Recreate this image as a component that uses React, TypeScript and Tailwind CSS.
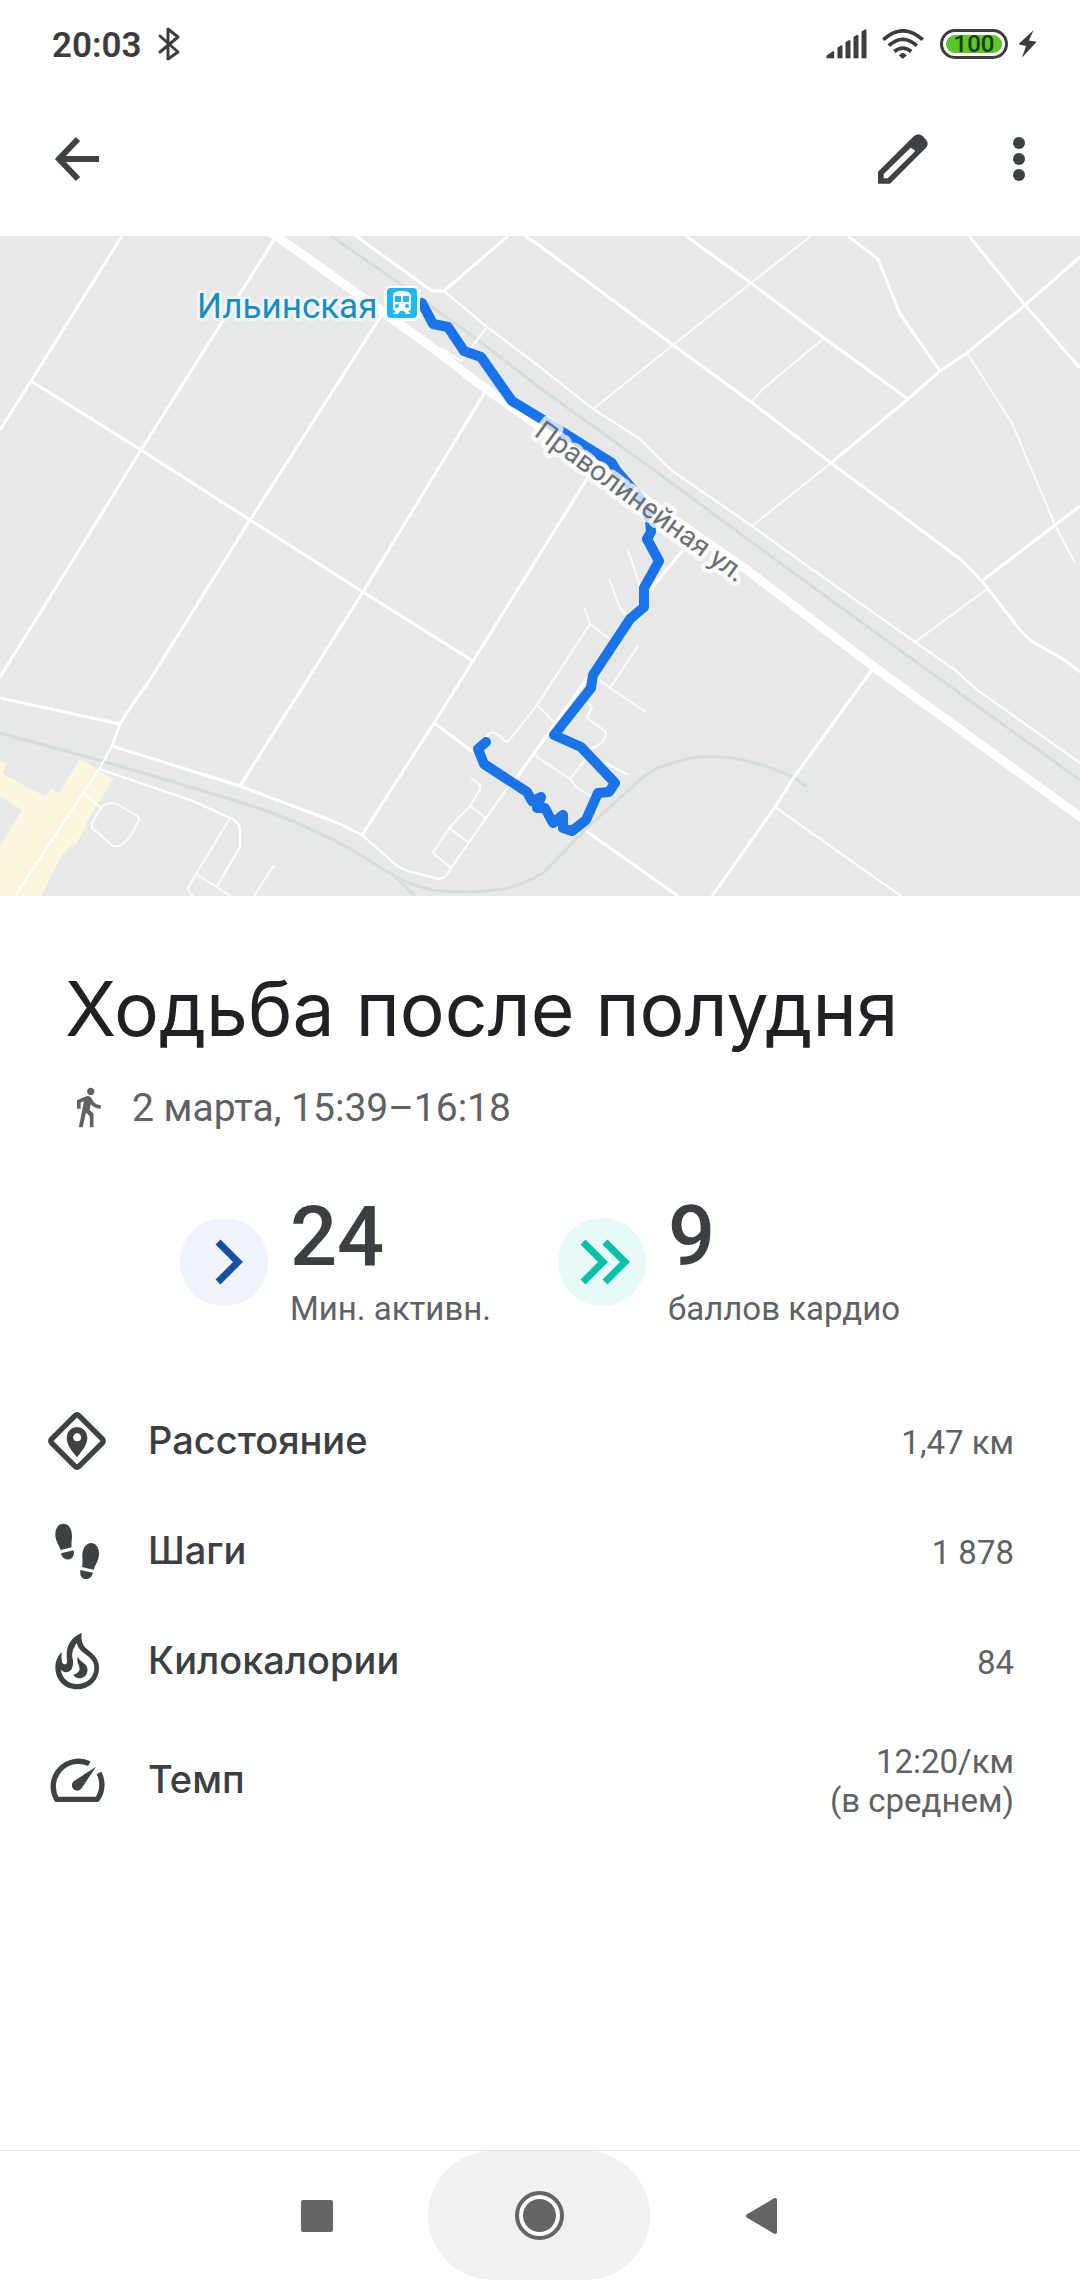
import React from "react";

const thickRoads = [
  "M122 236 L31 381 L0 430",
  "M274 240 L141 450 L73 560 L0 677",
  "M381 316 L250 520 L148 683 Q132 704 120 724 L112 746",
  "M485 392 L363 592 L240 786",
  "M588 477 L473 661 L434 723 L362 835",
  "M31 381 L141 450 L250 520 L363 592 L473 661",
  "M0 698 L120 724",
  "M112 746 L240 786 L338 823 L362 835",
  "M356 236 L432 291 L444 291 L508 236",
  "M525 236 L540 246 L673 345 L751 402 L831 463 L960 559 L982 581 L1020 630 L1031 641 L1063 659 L1080 672",
  "M686 236 L751 283 L824 338 L908 399",
  "M848 236 L878 259 L900 314 L940 371",
  "M969 236 L1025 305 L1080 368",
  "M1080 257 L1025 305 L967 353 L940 371 L908 399 L831 463",
  "M1080 506 L1055 525 L982 581",
  "M874 667 L794 777 L775 807 L712 896",
  "M586 831 L678 896",
  "M434 723 L473 752",
  "M508 787 L517 777 L540 745 L586 680 L650 590 L683 550",
];

const mediumRoads = [
  "M444 291 L487 327 L540 367 L593 409 L640 439 L671 470 L752 526 L806 565 L915 642 L955 670 L976 689 L1080 763",
  "M487 327 L461 361 L441 348",
  "M112 746 L99 769 L83 793 L15 896",
  "M362 835 L386 856 Q398 868 408 871 L439 879 Q447 878 451 868 L486 818 L508 787",
  "M99 769 L193 801 L230 818 Q240 822 240 830 L240 847 L217 886",
  "M775 807 L901 896",
];

const thinRoads = [
  "M811 236 L751 283 L673 345 L593 409",
  "M824 338 L764 388 L751 402",
  "M967 353 L1012 423 L1055 525 L1075 563",
  "M831 463 L752 526",
  "M987 589 L915 642",
  "M230 818 L196 874 L188 888 Q188 892 193 896",
  "M196 874 L231 896",
  "M274 865 L254 896",
  "M83 793 L101 808 Q108 801 117 804 L139 817 L138 822 L131 835 Q123 848 113 846 L92 828 V823 L101 808",
  "M471 778 L480 785 V789 L470 806 L449 828 L433 853 L451 868",
  "M470 806 L486 818",
  "M449 828 L469 843",
  "M486 742 Q486 731 496 733 L506 742 L511 738 L537 705 L590 624 L584 607",
  "M590 624 L611 640",
  "M537 705 L554 722",
  "M533 753 L540 759 L570 779 L576 787 L592 797",
  "M570 779 L585 760",
  "M590 749 Q604 744 606 735 L605 731 L587 718 L592 707 L588 703",
  "M604 762 L628 775",
  "M597 678 L610 688 L646 712",
  "M610 688 L638 646",
  "M609 579 L620 608 L626 615",
  "M628 551 L640 585",
];

const rails = [
  "M331 236 L399 283 L482 343 L540 388 L654 470 L776 560 L901 651 L1001 723 L1080 780",
  "M0 733 L14 737 L74 753 L133 770 L207 792 L255 807 Q285 817 310 829 Q340 842 362 856 L396 877 Q414 886 432 890 Q467 894 503 889 Q525 884 543 873 L588 827 L631 788 Q648 771 660 767 L686 759 Q712 754 743 760 Q770 766 795 778 L807 787",
  "M396 877 L415 896",
];

const track =
  "M422 303 L433 324 L448 327 L464 351 L481 357 L512 401 L540 418 L612 463 L616 470 L640 498 L650 520 L651 532 L647 539 L659 561 L644 588 V607 L630 619 L593 675 L591 688 L554 735 L581 747 L615 783 L609 792 L598 793 L586 820 L572 831 L563 828 V815 L553 823 L545 808 L537 808 L541 797 L532 801 L527 792 L484 764 L478 749 L486 742";

function RouteMap() {
  return (
    <svg
      className="block h-auto w-full bg-[#e7e8e8] font-[Roboto,sans-serif]"
      viewBox="0 236 1080 660"
      role="img"
      aria-label="Маршрут"
      fill="none"
    >
      <path
        d="M0 761 L6 763 L3 774 L46 797 L51 788 L59 793 L80 759 L113 779 L86 823 V827 L76 844 H73 L62 855 L41 896 H0 V847 L22 810 L0 796Z"
        fill="#fbf7df"
      />
      <g stroke="#d9dcdd" strokeWidth="3">
        {rails.map((d) => (
          <path key={d} d={d} />
        ))}
      </g>
      <g stroke="#fff" strokeLinejoin="round">
        <g strokeWidth="2" strokeOpacity="0.85">
          {thinRoads.map((d) => (
            <path key={d} d={d} />
          ))}
        </g>
        <g strokeWidth="2">
          {mediumRoads.map((d) => (
            <path key={d} d={d} />
          ))}
        </g>
        <g strokeWidth="3">
          {thickRoads.map((d) => (
            <path key={d} d={d} />
          ))}
        </g>
        <path d="M268 230 L362 297 L430 346 L482 386 L540 427 L747 570 L874 667 L1090 824" strokeWidth="9" />
      </g>
      <path d={track} stroke="#1a73e8" strokeWidth="10" strokeLinecap="round" strokeLinejoin="round" />
      <text
        transform="translate(533 435) rotate(36)"
        fontSize="28"
        fill="#6b7073"
        stroke="#fff"
        strokeOpacity="0.75"
        strokeWidth="9"
        strokeLinejoin="round"
        paintOrder="stroke"
      >
        Праволинейная ул.
      </text>
      <text
        x="197"
        y="318"
        fontSize="35"
        fill="#1a8cc2"
        stroke="#f0f6f8"
        strokeWidth="6"
        strokeLinejoin="round"
        paintOrder="stroke"
      >
        Ильинская
      </text>
      <g>
        <rect x="384" y="286" width="36" height="35" rx="6" fill="#fff" />
        <rect x="387" y="288" width="30" height="30" rx="4" fill="#1cb8fb" />
        <path
          d="M393 296 Q393 291 402 291 Q411 291 411 296 V308 Q411 311 408 311 L411 314 H406 L404 311 H400 L398 314 H393 L396 311 Q393 311 393 308Z"
          fill="#fff"
        />
        <path d="M395 296 H401 V302 H395Z M403 296 H409 V302 H403Z" fill="#1cb8fb" />
        <circle cx="397" cy="306" r="2" fill="#1cb8fb" />
        <circle cx="407" cy="306" r="2" fill="#1cb8fb" />
      </g>
    </svg>
  );
}

function StatusBar() {
  return (
    <div className="flex h-[88px] items-center justify-between pr-[43px] pl-[52px] text-[#3c3d3e]">
      <div className="flex items-center gap-[15px]">
        <span className="pt-1 text-[35px] font-semibold">20:03</span>
        <svg className="h-9 w-6" viewBox="0 0 24 36" fill="none" stroke="currentColor" strokeWidth="3" strokeLinejoin="round" strokeLinecap="round" aria-label="Bluetooth">
          <path d="M3 10 L21 26 L11 33 V3 L21 11 L3 26" />
        </svg>
      </div>
      <div className="flex items-center">
        <svg className="h-[30px] w-[41px]" viewBox="137 86 122 90" fill="currentColor" aria-label="Сигнал">
          <path d="M138 174 V166 L158 152 Q161 152 161 156 V174Z M171 174 V142 L182 135 Q186 135 186 139 V174Z M195 174 V126 L206 119 Q210 119 210 123 V174Z M219 174 V110 L230 103 Q234 103 234 107 V174Z M243 174 V94 L254 87 Q258 87 258 91 V174Z" />
        </svg>
        <svg className="ml-[15px] h-[30px] w-[42px]" viewBox="306 86 127 92" fill="none" stroke="currentColor" strokeWidth="11" aria-label="Wi-Fi">
          <path d="M309 119 Q369 64 430 119 M326 137 Q369 98 412 137 M343 155 Q369 134 395 155" />
          <path d="M357 167 Q369 152 381 167 L369 178Z" fill="currentColor" stroke="none" />
        </svg>
        <div className="ml-4 flex h-[30px] w-[68px] rounded-full border-[3px] border-[#3c3d3e] p-[3px]">
          <span className="flex flex-1 items-center justify-center rounded-full bg-[#5cc629] text-2xl leading-none font-medium text-[#1c3a12]">
            100
          </span>
        </div>
        <svg className="ml-[10px] h-[30px] w-[19px]" viewBox="713 88 59 90" fill="currentColor" aria-label="Зарядка">
          <path d="M761 90 L714 134 L738 139 L725 176 L771 126 L747 122Z" />
        </svg>
      </div>
    </div>
  );
}

function TopBar() {
  return (
    <div className="flex h-[148px] items-center justify-between pr-[37px] pb-[6px] pl-[53px] text-[#3f4244]">
      <button type="button" aria-label="Назад">
        <svg className="size-12" viewBox="0 0 48 48" fill="none" stroke="currentColor" strokeWidth="6">
          <path d="M46 24 H7 M25 4 L6 24 L25 44" />
        </svg>
      </button>
      <div className="flex items-center gap-[67px]">
        <button type="button" aria-label="Изменить">
          <svg className="size-[50px]" viewBox="0 0 150 150" fill="currentColor" fillRule="evenodd">
            <path d="M0 149 V113 L108 6 Q121 -5 134 6 L144 17 Q154 29 144 41 L36 149Z M17 120 V133 H29 L111 52 L108 47 L98 41Z" />
          </svg>
        </button>
        <button type="button" aria-label="Ещё">
          <svg className="size-12" viewBox="0 0 48 48" fill="currentColor">
            <circle cx="24" cy="8" r="6" />
            <circle cx="24" cy="24" r="6" />
            <circle cx="24" cy="40" r="6" />
          </svg>
        </button>
      </div>
    </div>
  );
}

function WalkIcon() {
  return (
    <svg className="size-11" viewBox="0 0 24 24" fill="currentColor" aria-hidden="true">
      <path d="M13.5 5.5c1.1 0 2-.9 2-2s-.9-2-2-2-2 .9-2 2 .9 2 2 2zM9.8 8.9L7 23h2.1l1.8-8 2.1 2v6h2v-7.5l-2.1-2 .6-3C14.8 12 16.8 13 19 13v-2c-1.9 0-3.5-1-4.3-2.4l-1-1.6c-.4-.6-1-1-1.7-1-.3 0-.5.1-.8.1L6 8.3V13h2V9.6l1.8-.7" />
    </svg>
  );
}

function DistanceIcon() {
  return (
    <>
      <rect x="29" y="29" width="116" height="116" rx="8" transform="rotate(45 87 87)" fill="none" stroke="currentColor" strokeWidth="16" />
      <path d="M87 136 C70 116 56 98 56 76 A31 31 0 0 1 118 76 C118 98 104 116 87 136Z M87 64 a12 12 0 1 0 1 0Z" />
    </>
  );
}

function StepsIcon() {
  return (
    <>
      <path d="M46 5 C62 5 72 22 72 42 C72 56 69 62 71 76 L38 84 C34 72 22 56 22 38 C22 18 32 5 46 5Z" />
      <path d="M39 94 L77 85 C80 100 74 109 64 112 C52 115 42 108 39 94Z" />
      <path d="M129 63 C115 63 104 78 103 98 C103 113 105 120 102 135 L137 143 C140 130 153 116 153 96 C153 77 144 63 129 63Z" />
      <path d="M97 144 L135 152 C132 166 122 172 111 171 C100 169 95 160 97 144Z" />
    </>
  );
}

function FlameIcon() {
  return (
    <>
      <path d="M101 2 C99 25 102 38 118 52 C138 68 153 82 153 108 C153 145 124 172 87 172 C50 172 22 145 22 106 C22 88 29 72 41 60 C40 78 40 97 50 97 C60 97 57 85 56 72 C55 38 70 16 101 2Z M86 33 C76 50 71 60 73 76 C80 102 70 120 56 121 C50 121 44 118 39 113 C41 138 62 156 87 156 C116 156 139 136 139 108 C139 90 130 80 112 67 C98 57 90 48 86 33Z" />
      <path d="M90 73 C84 92 94 98 95 110 C94 120 84 126 76 128 C82 138 92 141 102 138 C114 134 122 120 117 105 C112 92 94 90 90 73Z" />
    </>
  );
}

function PaceIcon() {
  return (
    <>
      <path d="M124 38 A76 76 0 0 0 26 145 H148 A76 76 0 0 0 153 66" fill="none" stroke="currentColor" strokeWidth="16" strokeLinejoin="round" />
      <path d="M144 47 L102 110 A16 16 0 1 1 77 91Z" />
    </>
  );
}

const metrics = [
  { label: "Расстояние", value: ["1,47 км"], Icon: DistanceIcon },
  { label: "Шаги", value: ["1 878"], Icon: StepsIcon },
  { label: "Килокалории", value: ["84"], Icon: FlameIcon },
  { label: "Темп", value: ["12:20/км", "(в среднем)"], Icon: PaceIcon },
];

function Metric({ label, value, Icon }: (typeof metrics)[number]) {
  return (
    <div className="flex min-h-[110px] items-center py-6 pr-[66px] pl-12">
      <svg className="size-[58px] text-[#3f4244]" viewBox="0 0 174 174" fill="currentColor" fillRule="evenodd" aria-hidden="true">
        <Icon />
      </svg>
      <dt className="ml-[42px] flex-1 pb-[2px] font-[Inter,sans-serif] text-[38px] leading-none font-medium text-[#3c4043]">{label}</dt>
      <dd className="pt-[2px] text-right text-[33px] leading-[39px] text-[#606264]">
        {value.map((line) => (
          <span key={line} className="block">
            {line}
          </span>
        ))}
      </dd>
    </div>
  );
}

export default function App() {
  return (
    <div className="flex min-h-screen flex-col bg-white font-[Roboto,sans-serif]">
      <header>
        <StatusBar />
        <TopBar />
      </header>
      <main>
        <RouteMap />
        <h1 className="px-[65px] pt-[68px] font-[Inter,sans-serif] text-[75px] leading-[90px] text-[#202124]">Ходьба после полудня</h1>
        <p className="mt-[30px] flex items-center gap-[22px] px-[66px] text-[39px] leading-[44px] text-[#606264]">
          <WalkIcon />
          <span className="pt-[2px]">2 марта, 15:39–16:18</span>
        </p>

        <div className="mt-[60px] flex justify-center gap-[67px]">
          <div className="flex items-center gap-[22px]">
            <span className="flex size-[88px] items-center justify-center rounded-full bg-[#eff3fa]">
              <svg className="size-[88px]" viewBox="0 0 88 88" fill="none" stroke="#174ea6" strokeWidth="7" aria-hidden="true">
                <path d="M38 24 L58 44 L38 64" />
              </svg>
            </span>
            <div>
              <p className="text-[83px] leading-[94px] font-medium text-[#3c4043]">24</p>
              <p className="text-[33px] leading-[50px] text-[#606264]">Мин. активн.</p>
            </div>
          </div>
          <div className="flex items-center gap-[22px]">
            <span className="flex size-[88px] items-center justify-center rounded-full bg-[#e8faf7]">
              <svg className="size-[88px]" viewBox="0 0 88 88" fill="none" stroke="#04c2a7" strokeWidth="7" aria-hidden="true">
                <path d="M25 24 L45 44 L25 64 M47 24 L67 44 L47 64" />
              </svg>
            </span>
            <div>
              <p className="text-[83px] leading-[94px] font-medium text-[#3c4043]">9</p>
              <p className="text-[33px] leading-[50px] text-[#606264]">баллов кардио</p>
            </div>
          </div>
        </div>

        <dl className="mt-[52px]">
          {metrics.map((m) => (
            <Metric key={m.label} {...m} />
          ))}
        </dl>
      </main>

      <nav className="mt-auto flex h-[130px] justify-center border-t border-[#e3e5e4] pr-[2px] text-[#656565]" aria-label="Системная навигация">
        <button type="button" className="flex w-[222px] items-center justify-center" aria-label="Недавние">
          <span className="size-8 rounded-[2px] bg-[#656565]" />
        </button>
        <button type="button" className="flex w-[222px] items-center justify-center rounded-full bg-[#f1f1f1]" aria-label="Домой">
          <span className="flex size-[49px] rounded-full border-4 border-[#656565] bg-white p-1">
            <span className="flex-1 rounded-full bg-[#656565]" />
          </span>
        </button>
        <button type="button" className="flex w-[222px] items-center justify-center" aria-label="Назад">
          <svg className="h-9 w-8" viewBox="0 0 32 36" fill="currentColor" stroke="currentColor" strokeWidth="4" strokeLinejoin="round">
            <path d="M3 18 L30 2 V34Z" />
          </svg>
        </button>
      </nav>
    </div>
  );
}
